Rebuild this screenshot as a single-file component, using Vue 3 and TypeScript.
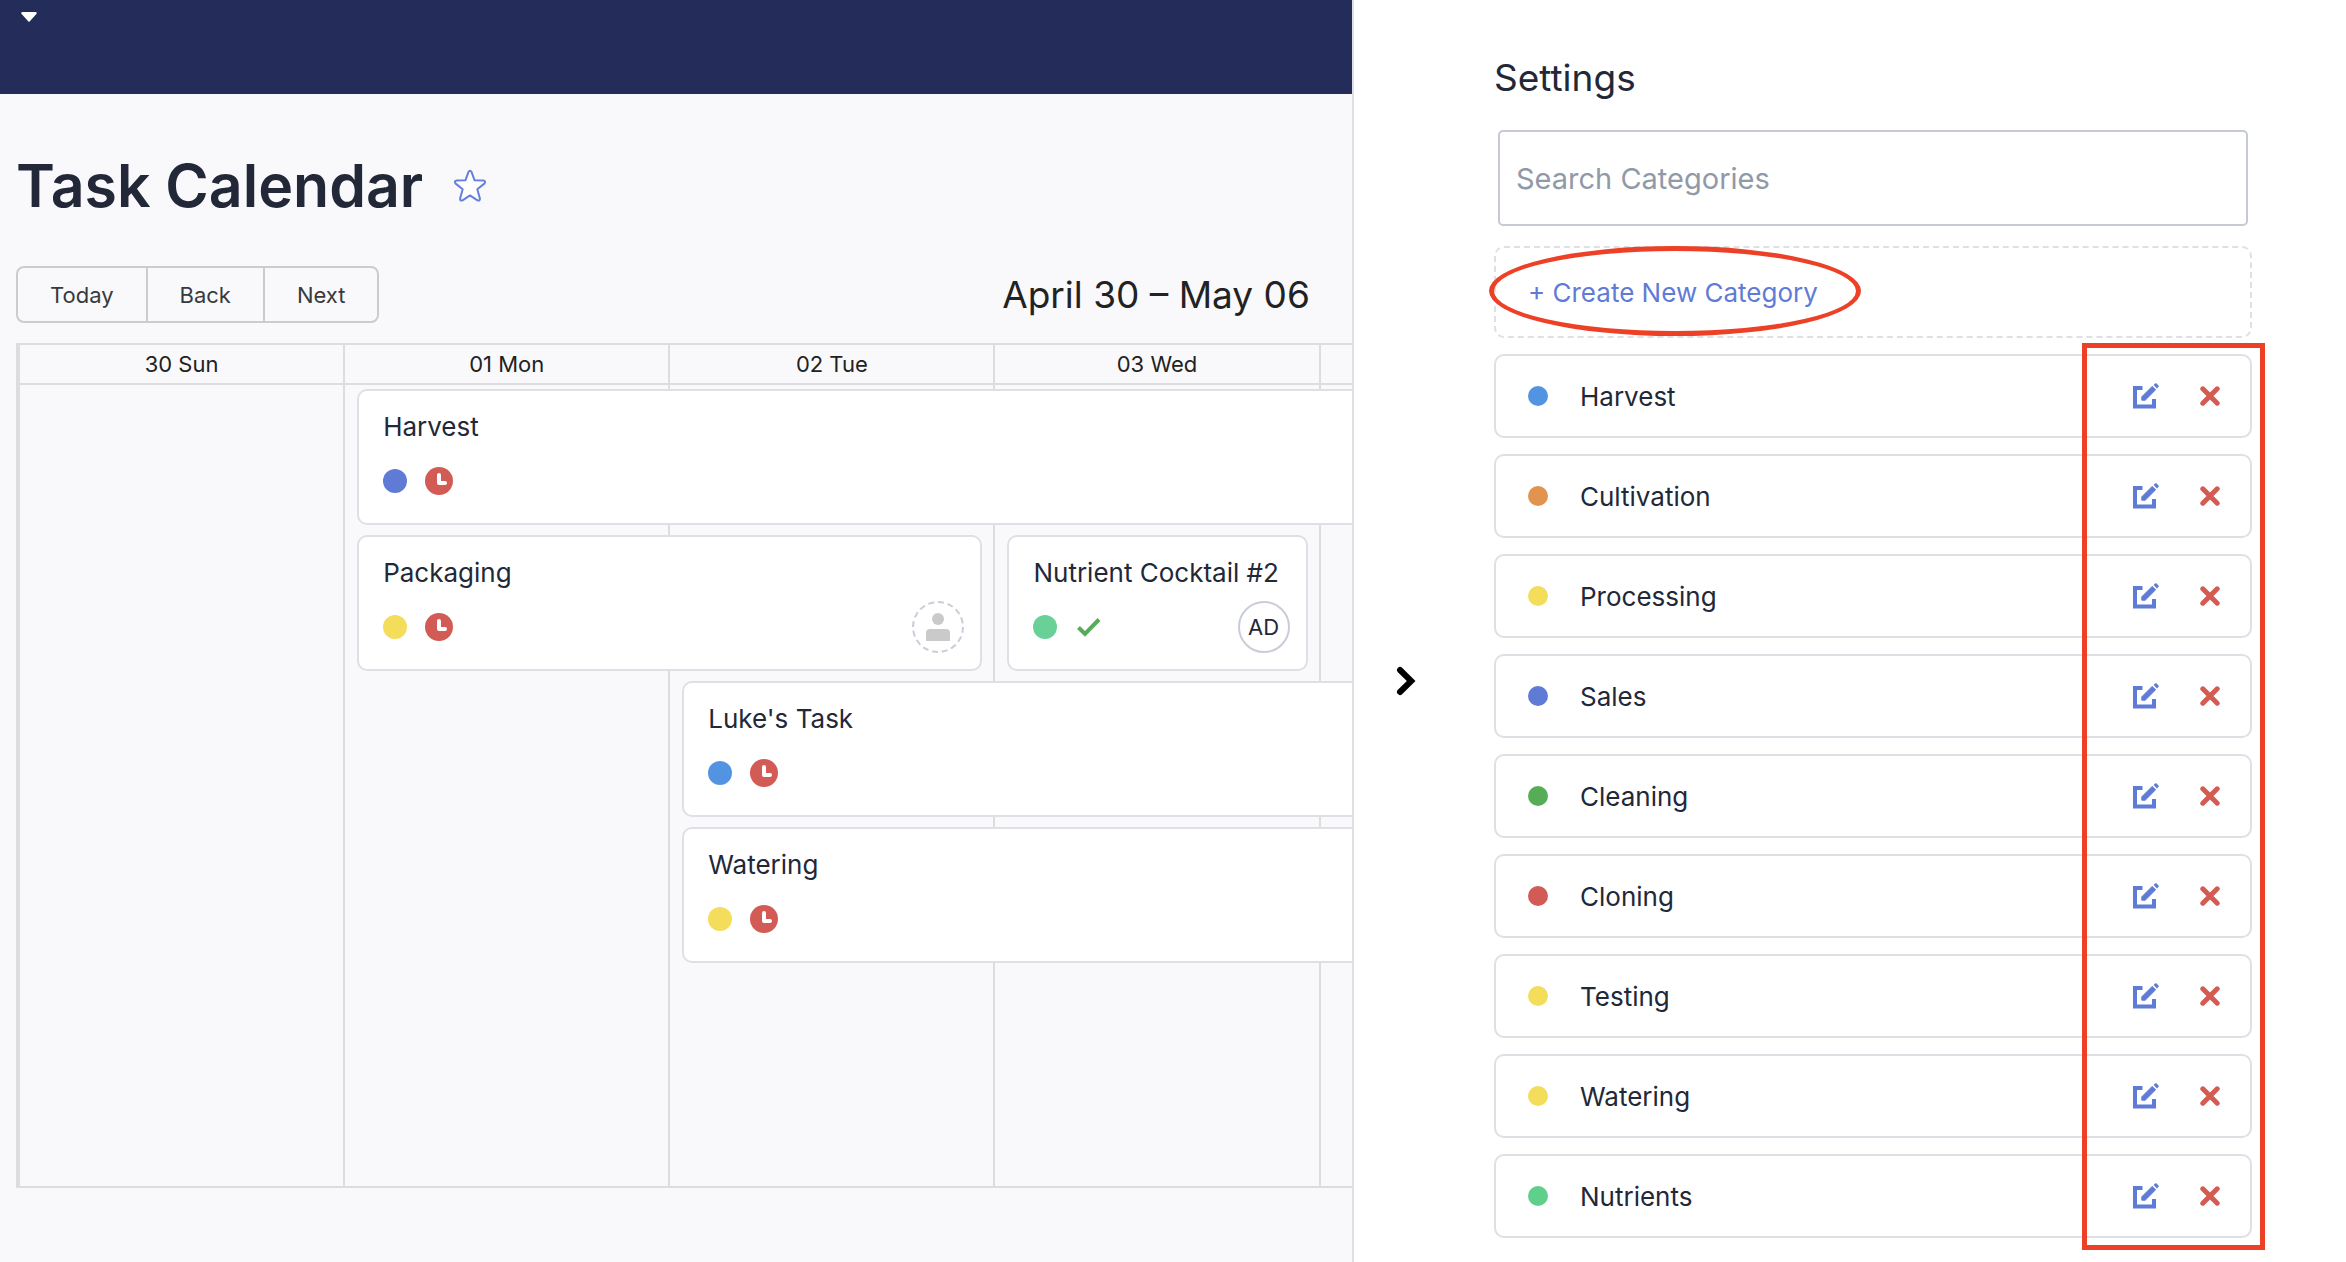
<script setup lang="ts">
import { ref } from 'vue'

interface Category {
  name: string
  color: string
}

interface Task {
  title: string
  color: string
  column: string
  row: number
  status: 'late' | 'done'
  assignee?: 'none' | string
}

const search = ref('')

const days: string[] = ['30 Sun', '01 Mon', '02 Tue', '03 Wed', '', '', '']

const tasks: Task[] = [
  { title: 'Harvest', color: '#5f7bd6', column: '2 / 8', row: 1, status: 'late' },
  { title: 'Packaging', color: '#f4dd5b', column: '2 / 4', row: 2, status: 'late', assignee: 'none' },
  { title: 'Nutrient Cocktail #2', color: '#69d197', column: '4 / 5', row: 2, status: 'done', assignee: 'AD' },
  { title: "Luke's Task", color: '#5394e2', column: '3 / 8', row: 3, status: 'late' },
  { title: 'Watering', color: '#f4dd5b', column: '3 / 8', row: 4, status: 'late' },
]

const categories: Category[] = [
  { name: 'Harvest', color: '#5394e2' },
  { name: 'Cultivation', color: '#e2934f' },
  { name: 'Processing', color: '#f4dd5b' },
  { name: 'Sales', color: '#5f7bd6' },
  { name: 'Cleaning', color: '#57ad57' },
  { name: 'Cloning', color: '#d35b55' },
  { name: 'Testing', color: '#f4dd5b' },
  { name: 'Watering', color: '#f4dd5b' },
  { name: 'Nutrients', color: '#5fd08c' },
]
</script>

<template>
  <div class="page">
    <div class="workspace">
      <header class="topbar">
        <button class="menu" type="button" aria-label="Open menu">
          <svg width="16" height="10" viewBox="0 0 16 10" aria-hidden="true">
            <path d="M1 0h14q1 .6.6 1.8L8.600 9.400q-.6.7-1.200 0L.4 1.800Q0 .6 1 0z" fill="#fff" />
          </svg>
        </button>
      </header>

      <main class="content">
        <div class="title-row">
          <h1>Task Calendar</h1>
          <button class="star" type="button" aria-label="Add to favourites">
            <svg width="34" height="34" viewBox="0 0 34 34" aria-hidden="true">
              <path
                d="M15.500 2.800q1.500-2.200 3 0l3 8.400 9 .4q2.800.6.8 3l-7 5.600 2.600 9.400q.2 2.600-2.400 1.800L17 26.400l-7.500 5q-2.600.8-2.400-1.800l2.600-9.400-7-5.600q-2-2.400.8-3l9-.4z"
                fill="#fff" stroke="#6480dc" stroke-width="2" stroke-linejoin="round"
              />
            </svg>
          </button>
        </div>

        <div class="toolbar">
          <div class="nav-group">
            <button type="button">Today</button>
            <button type="button">Back</button>
            <button type="button">Next</button>
          </div>
          <div class="range">April 30 – May 06</div>
        </div>

        <section class="calendar" aria-label="Week">
          <div class="day-heads">
            <div v-for="(day, i) in days" :key="i" class="day-head">{{ day }}</div>
          </div>
          <div class="week">
            <div class="day-columns">
              <div v-for="(day, i) in days" :key="i" class="day-column"></div>
            </div>
            <div class="events">
              <article
                v-for="task in tasks"
                :key="task.title"
                class="event"
                :style="{ gridColumn: task.column, gridRow: task.row }"
              >
                <h2>{{ task.title }}</h2>
                <div class="meta">
                  <span class="dot" :style="{ background: task.color }"></span>
                  <svg v-if="task.status === 'late'" width="28" height="28" viewBox="0 0 28 28" aria-label="Late">
                    <circle cx="14" cy="14" r="14" fill="#d35b55" />
                    <path d="M14 8v8h6" fill="none" stroke="#fff" stroke-width="4" stroke-linejoin="round" stroke-linecap="round" />
                  </svg>
                  <svg v-else width="28" height="28" viewBox="0 0 28 28" aria-label="Done">
                    <path d="M3.500 14.500l6.500 6.500L24 6.500" fill="none" stroke="#57ad57" stroke-width="4" />
                  </svg>
                  <span v-if="task.assignee === 'none'" class="avatar unassigned">
                    <svg width="24" height="28" viewBox="0 0 24 28" aria-label="Unassigned">
                      <circle cx="12" cy="6" r="6" fill="#cacaca" />
                      <path d="M0 28v-8q0-4 4-4h16q4 0 4 4v8z" fill="#cacaca" />
                    </svg>
                  </span>
                  <span v-else-if="task.assignee" class="avatar">{{ task.assignee }}</span>
                </div>
              </article>
            </div>
          </div>
        </section>
      </main>
    </div>

    <aside class="drawer">
      <div class="drawer-edge">
        <button type="button" aria-label="Close settings">
          <svg width="20" height="30" viewBox="0 0 20 30" aria-hidden="true">
            <path d="M4 4l11.200 11L4 26" fill="none" stroke="#000" stroke-width="6" stroke-linecap="round" />
          </svg>
        </button>
      </div>

      <div class="settings">
        <h2>Settings</h2>
        <input v-model="search" class="search" type="text" placeholder="Search Categories" aria-label="Search Categories" />

        <div class="create-wrap">
          <button class="create" type="button">+ Create New Category</button>
          <div class="mark-oval"></div>
        </div>

        <div class="list-wrap">
          <ul class="list">
            <li v-for="category in categories" :key="category.name">
              <span class="swatch" :style="{ background: category.color }"></span>
              <span class="name">{{ category.name }}</span>
              <button type="button" :aria-label="`Edit ${category.name}`">
                <svg width="26" height="26" viewBox="0 0 26 26" aria-hidden="true">
                  <path d="M0 3h9.500v4H4v14.500h15V16h4v9.500H0z" fill="#5f7bd6" />
                  <path d="M8.800 13.800L19.200 3.400l3.400 3.400L12.200 17.200H8.800z" fill="#5f7bd6" stroke="#5f7bd6" stroke-width="1" stroke-linejoin="round" />
                  <path d="M20.600 2L22 .6q.8-.8 1.600 0l1.800 1.800q.8.8 0 1.600l-1.400 1.400z" fill="#5f7bd6" />
                </svg>
              </button>
              <button type="button" :aria-label="`Delete ${category.name}`">
                <svg width="20" height="20" viewBox="0 0 20 20" aria-hidden="true">
                  <path d="M2.800 2.800l14.400 14.400M17.200 2.800L2.800 17.200" fill="none" stroke="#d35b52" stroke-width="5" stroke-linecap="round" />
                </svg>
              </button>
            </li>
          </ul>
          <div class="mark-box"></div>
        </div>
      </div>
    </aside>
  </div>
</template>

<style>
body {
  margin: 0;
}
</style>

<style scoped>
.page {
  display: grid;
  grid-template-columns: 676fr 497fr;
  min-height: 100vh;
  overflow: hidden;
  background: #f9f9fc;
  color: #222838;
  font-family: Inter, "Liberation Sans", sans-serif;
}

.page * {
  box-sizing: border-box;
}

button {
  margin: 0;
  padding: 0;
  border: 0;
  background: none;
  color: inherit;
  font: inherit;
  cursor: pointer;
}

svg {
  display: block;
}

h1,
h2 {
  margin: 0;
}

/* The workspace runs under the drawer across the full window. */
.workspace {
  grid-column: 1 / 3;
  grid-row: 1;
  display: flex;
  flex-direction: column;
  min-width: 0;
}

.topbar {
  display: flex;
  align-items: flex-start;
  height: 94px;
  padding: 12px 21px;
  background: #242c5a;
}

.content {
  flex: 1;
  display: flex;
  flex-direction: column;
  padding: 59px 50px 74px 16px;
}

.title-row {
  display: flex;
  align-items: center;
  gap: 30px;
  margin-bottom: 47px;
}

h1 {
  font-size: 59px;
  line-height: 66px;
  font-weight: 600;
}

.toolbar {
  display: grid;
  grid-template-columns: 1fr auto 1fr;
  align-items: center;
  margin-bottom: 20px;
}

.nav-group {
  display: flex;
  justify-self: start;
  border: 2px solid #ccc;
  border-radius: 8px;
  color: #373a3c;
}

.nav-group button {
  height: 53px;
  padding: 0 32px;
  font-size: 22px;
}

.nav-group button + button {
  border-left: 2px solid #ccc;
}

.range {
  color: #222;
  font-size: 37px;
  line-height: 48px;
}

.calendar {
  flex: 1;
  display: flex;
  flex-direction: column;
  border: 2px solid #ddd;
}

.day-heads {
  display: grid;
  grid-template-columns: repeat(7, 1fr);
  border-bottom: 2px solid #ddd;
}

.day-head {
  height: 38px;
  border-left: 2px solid #ddd;
  color: #222;
  font-size: 22px;
  line-height: 38px;
  text-align: center;
}

.week {
  flex: 1;
  display: grid;
}

.day-columns,
.events {
  grid-area: 1 / 1;
  display: grid;
  grid-template-columns: repeat(7, 1fr);
}

.day-column {
  border-left: 2px solid #ddd;
}

.events {
  align-content: start;
  row-gap: 10px;
  padding-top: 4px;
}

.event {
  margin: 0 11px 0 14px;
  padding: 20px 16px 16px 24px;
  border: 2px solid #dfdfe6;
  border-radius: 10px;
  background: #fff;
}

.event h2 {
  margin-bottom: 12px;
  font-size: 26px;
  line-height: 32px;
  font-weight: 400;
  white-space: nowrap;
}

.meta {
  display: flex;
  align-items: center;
  gap: 18px;
  height: 52px;
}

.dot {
  width: 24px;
  height: 24px;
  border-radius: 50%;
}

.avatar {
  display: flex;
  align-items: center;
  justify-content: center;
  width: 52px;
  height: 52px;
  margin-left: auto;
  border: 2px solid #c9cdd8;
  border-radius: 50%;
  font-size: 22px;
}

.avatar.unassigned {
  border-style: dashed;
}

.drawer {
  z-index: 1;
  grid-column: 2;
  grid-row: 1;
  display: flex;
  padding-right: 94px;
  border-left: 2px solid #dfdfe6;
  background: #fff;
}

.drawer-edge {
  display: flex;
  align-items: center;
  width: 140px;
  padding: 100px 0 0 42px;
}

.settings {
  flex: 1;
  display: flex;
  flex-direction: column;
  min-width: 0;
  padding: 54px 0 20px;
}

.settings h2 {
  margin-bottom: 28px;
  font-size: 37px;
  line-height: 48px;
  font-weight: 400;
}

.search {
  height: 96px;
  margin: 0 4px 20px;
  padding: 0 16px;
  border: 2px solid #c5cad4;
  border-radius: 5px;
  background: #fff;
  color: inherit;
  font-family: inherit;
  font-size: 29px;
}

.search::placeholder {
  color: #9099a8;
  opacity: 1;
}

.create-wrap,
.list-wrap {
  position: relative;
}

.create {
  display: block;
  width: 100%;
  height: 92px;
  margin-bottom: 16px;
  padding: 0 32px;
  border: 2px dashed #dfdfe6;
  border-radius: 10px;
  color: #5f7bd6;
  font-size: 26px;
  text-align: left;
}

.mark-oval {
  position: absolute;
  top: 0;
  left: -5px;
  width: 372px;
  height: 90px;
  border: 5px solid #ec4126;
  border-radius: 50%;
  pointer-events: none;
}

.mark-box {
  position: absolute;
  top: -11px;
  right: -13px;
  bottom: -12px;
  width: 183px;
  border: 5px solid #ec4126;
  pointer-events: none;
}

.list {
  display: flex;
  flex-direction: column;
  gap: 16px;
  margin: 0;
  padding: 0;
  list-style: none;
}

.list li {
  display: flex;
  align-items: center;
  height: 84px;
  padding: 0 30px 0 32px;
  border: 2px solid #dfdfe6;
  border-radius: 10px;
}

.list button + button {
  margin-left: 41px;
}

.swatch {
  width: 20px;
  height: 20px;
  border-radius: 50%;
}

.name {
  flex: 1;
  margin-left: 32px;
  font-size: 26px;
}
</style>
